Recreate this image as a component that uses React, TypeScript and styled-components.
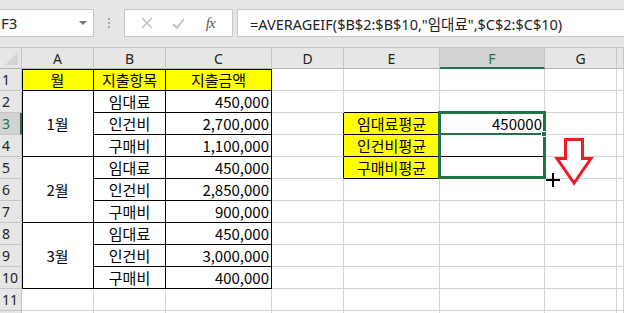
import React from "react";
import styled, { createGlobalStyle, css } from "styled-components";

const GlobalStyle = createGlobalStyle`
  html, body { margin: 0; padding: 0; background: #ffffff; overflow: hidden; }
  body { font-family: "Noto Sans", "Noto Sans CJK KR", sans-serif; }
  * { box-sizing: border-box; }
`;

const GRID = "#d4d4d4";
const HEAD_LINE = "#c6c6c6";
const GREEN = "#217346";
const BLACK = "#000000";

const Page = styled.div`
  width: 624px;
  height: 313px;
  overflow: hidden;
  display: flex;
  flex-direction: column;
`;

const FormulaBar = styled.div`
  height: 47px;
  flex: none;
  background: #e6e6e6;
  display: flex;
  align-items: flex-start;
  padding-top: 9px;
`;

const Box = styled.div`
  height: 28px;
  background: #ffffff;
  border: 1px solid #c6c6c6;
  display: flex;
  align-items: center;
`;

const NameBox = styled(Box)`
  width: 95px;
  margin-left: -1px;
  padding-left: 1px;
  justify-content: space-between;
  font-size: 15px;
  color: #222;
`;

const Caret = styled.span`
  width: 0;
  height: 0;
  border-left: 4px solid transparent;
  border-right: 4px solid transparent;
  border-top: 4px solid #777;
  margin-right: 6px;
`;

const Grip = styled.div`
  width: 30px;
  height: 28px;
  display: flex;
  flex-direction: column;
  align-items: center;
  justify-content: center;
  gap: 2px;
`;

const Dot = styled.span`
  width: 2px;
  height: 2px;
  background: #a6a6a6;
`;

const Buttons = styled(Box)`
  width: 109px;
  justify-content: space-around;
  padding: 0 6px 0 6px;
  margin-right: 4px;
`;

const IconBtn = styled.span<{ $dark?: boolean }>`
  width: 30px;
  display: flex;
  justify-content: center;
  align-items: center;
  color: ${(p) => (p.$dark ? "#555" : "#bdbdbd")};
`;

const Fx = styled.span`
  font-family: "Liberation Serif", serif;
  font-style: italic;
  font-size: 15px;
  color: #555;
  letter-spacing: -1px;
`;

const FormulaInput = styled(Box)`
  flex: 1;
  border-right: none;
  padding-left: 12px;
  font-size: 14.5px;
  color: #222;
  white-space: nowrap;
  overflow: hidden;
`;

const SheetWrap = styled.div`
  position: relative;
  flex: 1;
  overflow: hidden;
`;

const Sheet = styled.div`
  display: grid;
  grid-template-columns: 22px 72px 72px 106px 72px 96px 105px 72px 1fr;
  grid-auto-rows: 22px;
`;

const Corner = styled.div`
  background: #e6e6e6;
  border-top: 1px solid ${HEAD_LINE};
  border-right: 1px solid ${HEAD_LINE};
  border-bottom: 1px solid #b5b5b5;
  position: relative;
  &::after {
    content: "";
    position: absolute;
    right: 3px;
    bottom: 3px;
    width: 0;
    height: 0;
    border-left: 13px solid transparent;
    border-bottom: 13px solid #d4d4d4;
  }
`;

const ColHead = styled.div<{ $active?: boolean }>`
  background: ${(p) => (p.$active ? "#d2d2d2" : "#e6e6e6")};
  border-top: 1px solid ${HEAD_LINE};
  border-right: 1px solid ${HEAD_LINE};
  border-bottom: ${(p) => (p.$active ? `2px solid ${GREEN}` : "1px solid #b5b5b5")};
  display: flex;
  align-items: center;
  justify-content: center;
  font-size: 14px;
  color: ${(p) => (p.$active ? GREEN : "#222")};
  padding-top: ${(p) => (p.$active ? "1px" : "0")};
`;

const RowHead = styled.div<{ $active?: boolean }>`
  background: ${(p) => (p.$active ? "#d2d2d2" : "#e6e6e6")};
  border-right: ${(p) => (p.$active ? `2px solid ${GREEN}` : `1px solid ${HEAD_LINE}`)};
  border-bottom: 1px solid ${HEAD_LINE};
  display: flex;
  align-items: center;
  padding-left: 2px;
  font-size: 14px;
  color: ${(p) => (p.$active ? GREEN : "#222")};
`;

type CellProps = {
  $bg?: string;
  $align?: "left" | "center" | "right";
  $r?: string;
  $b?: string;
  $t?: boolean;
  $l?: boolean;
  $span?: number;
};

const Cell = styled.div<CellProps>`
  background: ${(p) => p.$bg || "#ffffff"};
  border-right: 1px solid ${(p) => p.$r || GRID};
  border-bottom: 1px solid ${(p) => p.$b || GRID};
  display: flex;
  align-items: center;
  justify-content: ${(p) =>
    p.$align === "right" ? "flex-end" : p.$align === "center" ? "center" : "flex-start"};
  padding: 0 2px 1px 2px;
  font-family: "Noto Sans CJK KR", "Noto Sans", sans-serif;
  font-size: 15px;
  color: #000;
  white-space: nowrap;
  ${(p) => p.$span && css`grid-row: span ${p.$span};`}
  ${(p) => {
    const s: string[] = [];
    if (p.$t) s.push(`inset 0 1px 0 ${BLACK}`);
    if (p.$l) s.push(`inset 1px 0 0 ${BLACK}`);
    return s.length ? css`box-shadow: ${s.join(", ")};` : "";
  }}
`;

const Selection = styled.div`
  position: absolute;
  left: 438px;
  top: 64px;
  width: 108px;
  height: 68px;
  border: 3px solid ${GREEN};
  pointer-events: none;
`;

const ActiveLine = styled.div`
  position: absolute;
  left: 441px;
  top: 86px;
  width: 103px;
  height: 2px;
  background: ${GREEN};
`;

const FillHandle = styled.div`
  position: absolute;
  left: 541px;
  top: 84px;
  width: 6px;
  height: 6px;
  background: ${GREEN};
  border: 1px solid #ffffff;
`;

const Overlay = styled.svg<{ $x: number; $y: number }>`
  position: absolute;
  left: ${(p) => p.$x}px;
  top: ${(p) => p.$y}px;
  overflow: visible;
`;

const cols = ["A", "B", "C", "D", "E", "F", "G"];

const yellow = "#ffff00";

export default function App() {
  const dataRows: { month?: string; item: string; amount: string }[] = [
    { month: "1월", item: "임대료", amount: "450,000" },
    { item: "인건비", amount: "2,700,000" },
    { item: "구매비", amount: "1,100,000" },
    { month: "2월", item: "임대료", amount: "450,000" },
    { item: "인건비", amount: "2,850,000" },
    { item: "구매비", amount: "900,000" },
    { month: "3월", item: "임대료", amount: "450,000" },
    { item: "인건비", amount: "3,000,000" },
    { item: "구매비", amount: "400,000" },
  ];

  const avg: Record<number, { label: string; value: string }> = {
    3: { label: "임대료평균", value: "450000" },
    4: { label: "인건비평균", value: "" },
    5: { label: "구매비평균", value: "" },
  };

  const renderRest = (r: number) => {
    const a = avg[r];
    const inAvg = !!a;
    return (
      <>
        <Cell $r={inAvg ? BLACK : undefined} />
        <Cell
          $bg={inAvg ? yellow : undefined}
          $align="center"
          $r={inAvg ? BLACK : undefined}
          $b={inAvg || r === 2 ? BLACK : undefined}
        >
          {a?.label}
        </Cell>
        <Cell $align="right" $r={inAvg ? BLACK : undefined} $b={inAvg || r === 2 ? BLACK : undefined}>
          {a?.value}
        </Cell>
        <Cell />
        <Cell />
      </>
    );
  };

  return (
    <>
      <GlobalStyle />
      <Page>
        <FormulaBar>
          <NameBox>
            F3
            <Caret />
          </NameBox>
          <Grip>
            <Dot />
            <Dot />
            <Dot />
          </Grip>
          <Buttons>
            <IconBtn>
              <svg width="12" height="12" viewBox="0 0 12 12">
                <path d="M1 1 L11 11 M11 1 L1 11" stroke="currentColor" strokeWidth="1.4" fill="none" />
              </svg>
            </IconBtn>
            <IconBtn>
              <svg width="13" height="11" viewBox="0 0 13 11">
                <path d="M1 6 L5 10 L12 1" stroke="currentColor" strokeWidth="1.8" fill="none" />
              </svg>
            </IconBtn>
            <IconBtn $dark>
              <Fx>fx</Fx>
            </IconBtn>
          </Buttons>
          <FormulaInput>=AVERAGEIF($B$2:$B$10,"임대료",$C$2:$C$10)</FormulaInput>
        </FormulaBar>
        <SheetWrap>
          <Sheet>
            <Corner />
            {cols.map((c) => (
              <ColHead key={c} $active={c === "F"}>
                {c}
              </ColHead>
            ))}
            <ColHead />

            <RowHead>1</RowHead>
            <Cell $bg={yellow} $align="center" $r={BLACK} $b={BLACK} $t $l>
              월
            </Cell>
            <Cell $bg={yellow} $align="center" $r={BLACK} $b={BLACK} $t>
              지출항목
            </Cell>
            <Cell $bg={yellow} $align="center" $r={BLACK} $b={BLACK} $t>
              지출금액
            </Cell>
            <Cell />
            <Cell />
            <Cell />
            <Cell />
            <Cell />

            {dataRows.map((d, i) => {
              const r = i + 2;
              return (
                <React.Fragment key={r}>
                  <RowHead $active={r === 3}>{r}</RowHead>
                  {d.month && (
                    <Cell $span={3} $align="center" $r={BLACK} $b={BLACK} $l>
                      {d.month}
                    </Cell>
                  )}
                  <Cell $align="center" $r={BLACK} $b={BLACK}>
                    {d.item}
                  </Cell>
                  <Cell $align="right" $r={BLACK} $b={BLACK}>
                    {d.amount}
                  </Cell>
                  {renderRest(r)}
                </React.Fragment>
              );
            })}

            {[11, 12].map((r) => (
              <React.Fragment key={r}>
                <RowHead>{r === 11 ? r : ""}</RowHead>
                <Cell />
                <Cell />
                <Cell />
                <Cell />
                <Cell />
                <Cell />
                <Cell />
                <Cell />
              </React.Fragment>
            ))}
          </Sheet>

          <Selection />
          <ActiveLine />
          <FillHandle />
          <Overlay $x={546} $y={126} width="14" height="14" viewBox="0 0 14 14">
            <path d="M7 0 V14 M0 7 H14" stroke="#000" strokeWidth="2" fill="none" />
          </Overlay>
          <Overlay $x={554} $y={90} width="40" height="48" viewBox="0 0 40 48">
            <path
              d="M11.5 2.5 H28.5 V21.5 H37 L20 46 L3 21.5 H11.5 Z"
              stroke="#ed1c24"
              strokeWidth="3"
              fill="#ffffff"
              strokeLinejoin="miter"
            />
          </Overlay>
        </SheetWrap>
      </Page>
    </>
  );
}
